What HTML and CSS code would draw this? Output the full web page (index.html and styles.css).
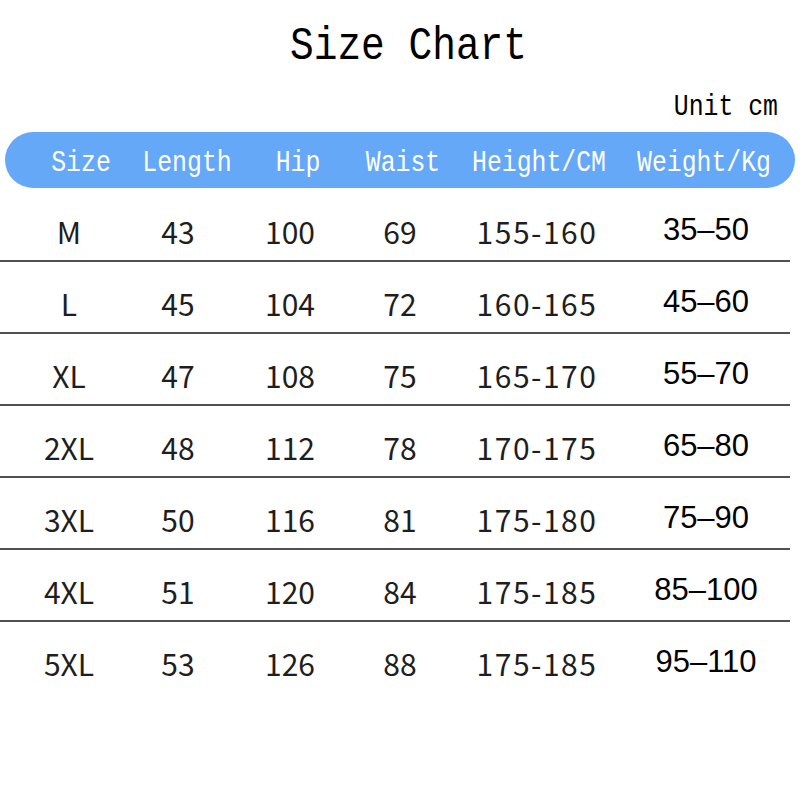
FILE: index.html
```html
<!DOCTYPE html>
<html>
<head>
<meta charset="utf-8">
<link rel="stylesheet" href="styles.css">
</head>
<body>
<div class="page">
  <h1 class="title"><span class="tall">Size Chart</span></h1>
  <div class="unit"><span class="tall">Unit cm</span></div>
  <div class="head">
    <div class="hc"><span class="tall">Size</span></div>
    <div class="hc"><span class="tall">Length</span></div>
    <div class="hc"><span class="tall">Hip</span></div>
    <div class="hc"><span class="tall">Waist</span></div>
    <div class="hc"><span class="tall">Height/CM</span></div>
    <div class="hc"><span class="tall">Weight/Kg</span></div>
  </div>
  <div class="rows">
    <div class="row"><div class="c">M</div><div class="c">43</div><div class="c">100</div><div class="c">69</div><div class="c h">155-160</div><div class="c w">35–50</div></div>
    <div class="row"><div class="c">L</div><div class="c">45</div><div class="c">104</div><div class="c">72</div><div class="c h">160-165</div><div class="c w">45–60</div></div>
    <div class="row"><div class="c">XL</div><div class="c">47</div><div class="c">108</div><div class="c">75</div><div class="c h">165-170</div><div class="c w">55–70</div></div>
    <div class="row"><div class="c">2XL</div><div class="c">48</div><div class="c">112</div><div class="c">78</div><div class="c h">170-175</div><div class="c w">65–80</div></div>
    <div class="row"><div class="c">3XL</div><div class="c">50</div><div class="c">116</div><div class="c">81</div><div class="c h">175-180</div><div class="c w">75–90</div></div>
    <div class="row"><div class="c">4XL</div><div class="c">51</div><div class="c">120</div><div class="c">84</div><div class="c h">175-185</div><div class="c w">85–100</div></div>
    <div class="row last"><div class="c">5XL</div><div class="c">53</div><div class="c">126</div><div class="c">88</div><div class="c h">175-185</div><div class="c w">95–110</div></div>
  </div>
</div>
</body>
</html>
```
FILE: styles.css
```css
html, body {
  margin: 0;
  padding: 0;
  background: #ffffff;
}
.page {
  width: 800px;
  height: 800px;
  box-sizing: border-box;
  padding-top: 24px;
}
.tall {
  display: inline-block;
  transform: scaleY(1.18);
}
.title {
  margin: 0;
  font-family: "Liberation Mono", "DejaVu Sans Mono", monospace;
  font-weight: normal;
  font-size: 39.5px;
  line-height: 46px;
  color: #000;
  text-align: center;
  padding-left: 17px;
}
.unit {
  margin-top: 23px;
  font-family: "Liberation Mono", "DejaVu Sans Mono", monospace;
  font-size: 24.8px;
  line-height: 28px;
  color: #000;
  text-align: right;
  padding-right: 22px;
}
.head {
  margin: 11px 5px 0 5px;
  height: 56px;
  border-radius: 28px;
  background: #66a8f8;
  display: grid;
  grid-template-columns: 152px 60px 162px 48px 224px 106px;
  align-items: center;
  font-family: "Liberation Mono", "DejaVu Sans Mono", monospace;
  font-size: 24.8px;
  color: #ffffff;
}
.hc {
  display: flex;
  justify-content: center;
  white-space: nowrap;
  padding-top: 5px;
}
.rows {
  padding-top: 2px;
}
.row {
  width: 790px;
  height: 72px;
  box-sizing: border-box;
  padding-top: 12px;
  border-bottom: 2px solid #505050;
  display: grid;
  grid-template-columns: 138px 80px 144px 76px 198px 140px;
  align-items: center;
  font-family: "Noto Sans CJK SC", "Noto Sans", sans-serif;
  font-size: 30px;
  color: #1e1e1e;
}
.row.last {
  border-bottom-color: transparent;
}
.c {
  display: flex;
  justify-content: center;
  white-space: nowrap;
  line-height: 40px;
}
.c.h {
  letter-spacing: 1.5px;
}
.c.w {
  font-family: "Liberation Sans", Arial, sans-serif;
  font-size: 31px;
  color: #000;
  margin-top: -2px;
}
```
